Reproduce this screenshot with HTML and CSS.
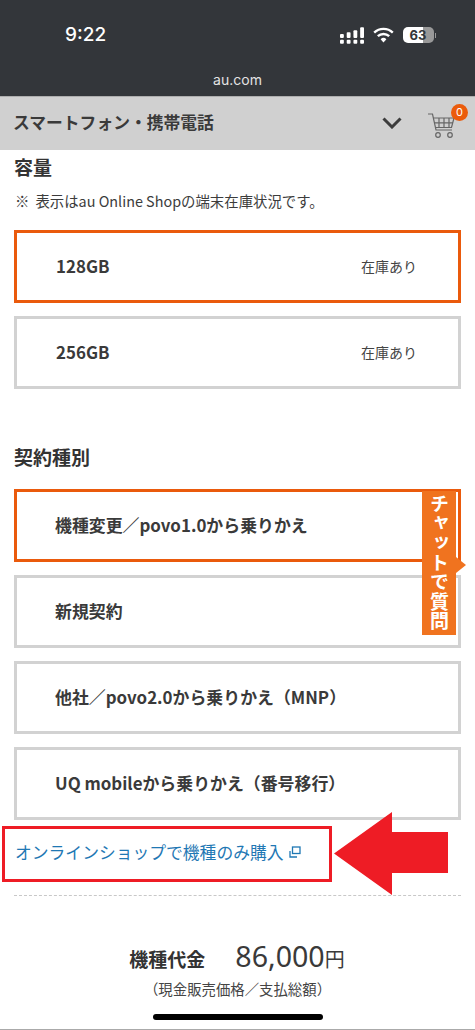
FILE: index.html
```html
<!DOCTYPE html>
<html lang="ja">
<head>
<meta charset="utf-8">
<title>au.com</title>
<link rel="stylesheet" href="styles.css">
</head>
<body>
<div class="phone">
  <header class="chrome">
    <div class="status">
      <span class="time">9:22</span>
      <div class="status-icons">
        <svg class="signal" width="24" height="17" viewBox="0 0 25 17"><g fill="#fff"><rect x="0" y="7" width="4" height="4" rx="1"/><rect x="0" y="13" width="4" height="4" rx="1"/><rect x="7" y="5" width="4" height="6" rx="1"/><rect x="7" y="13" width="4" height="4" rx="1"/><rect x="14" y="3" width="4" height="8" rx="1"/><rect x="14" y="13" width="4" height="4" rx="1"/><rect x="21" y="0" width="4" height="11" rx="1"/><rect x="21" y="13" width="4" height="4" rx="1"/></g></svg>
        <svg class="wifi" width="21" height="16" viewBox="0 0 21 16"><g fill="none" stroke="#fff" stroke-width="2.4"><path d="M1.2 5.6a13.5 13.5 0 0 1 18.6 0"/><path d="M4.800 9.200a8.400 8.400 0 0 1 11.400 0"/></g><path d="M7.600 12.200a4.200 4.200 0 0 1 5.800 0L10.500 15.400z" fill="#fff"/></svg>
        <div class="battery"><span class="battery-num">63</span></div>
        <span class="battery-tip"></span>
      </div>
    </div>
    <div class="url">au.com</div>
  </header>
  <nav class="nav">
    <span class="nav-title">スマートフォン・携帯電話</span>
    <svg class="chev" width="20" height="12" viewBox="0 0 20 12"><path d="M1.500 1.500 10 10l8.500-8.500" fill="none" stroke="#3c3c3c" stroke-width="3"/></svg>
    <div class="cart">
      <svg width="28" height="26" viewBox="0 0 28 26"><g fill="none" stroke="#666" stroke-width="1.200"><path d="M1 1h4.500l3.500 16h16"/><path d="M6 5h21l-2.500 9.500H8"/><path d="M12 5v9.500M17 5v9.500M22 5v9.500M7 9.800h19"/><circle cx="11" cy="22" r="2.300"/><circle cx="23" cy="22" r="2.300"/></g></svg>
      <span class="badge">0</span>
    </div>
  </nav>
  <main class="main">
    <h2 class="h-capacity">容量</h2>
    <p class="note"><span class="note-mark">※</span>表示はau Online Shopの端末在庫状況です。</p>
    <div class="options">
      <div class="opt sel cap"><span class="opt-name">128GB</span><span class="stock">在庫あり</span></div>
      <div class="opt cap"><span class="opt-name">256GB</span><span class="stock">在庫あり</span></div>
    </div>
    <h2 class="h-contract">契約種別</h2>
    <div class="options">
      <div class="opt sel"><span class="opt-name">機種変更／povo1.0から乗りかえ</span></div>
      <div class="opt"><span class="opt-name">新規契約</span></div>
      <div class="opt"><span class="opt-name">他社／povo2.0から乗りかえ（MNP）</span></div>
      <div class="opt"><span class="opt-name">UQ mobileから乗りかえ（番号移行）</span></div>
    </div>
    <div class="link-row">
      <a class="link">オンラインショップで機種のみ購入<svg class="ext" width="12" height="12" viewBox="0 0 12 12"><g fill="none" stroke="#1f78b4" stroke-width="1.300"><rect x="3.500" y="1" width="7.500" height="6.500"/><path d="M1 5v6h7"/></g></svg></a>
    </div>
    <div class="dash"></div>
    <div class="price-row"><span class="price-label">機種代金</span><span class="price">86,000<span class="yen">円</span></span></div>
    <p class="price-note">（現金販売価格／支払総額）</p>
  </main>
  <div class="chat"><span class="chat-text">チャットで質問</span><span class="chat-tip"></span></div>
  <svg class="arrow" width="116" height="83" viewBox="0 0 116 83"><path d="M0 41.500 58 0V20H114V61H58V83z" fill="#ee1c25"/></svg>
  <div class="home"></div>
</div>
</body>
</html>
```

FILE: styles.css
```css
* { box-sizing: border-box; }
html, body { margin: 0; padding: 0; background: #fff; }
body { font-family: "Noto Sans CJK JP", "Noto Sans", sans-serif; color: #333; }
.phone { position: relative; width: 475px; height: 1030px; overflow: hidden; border-bottom: 1px solid #aaa; }

.chrome { height: 96px; background: #33363a; color: #fff; display: flex; flex-direction: column; }
.status { height: 70px; display: flex; align-items: center; padding: 0 0 0 65px; }
.time { font-family: Inter, "Noto Sans", sans-serif; font-size: 19px; font-weight: 500; line-height: 70px; }
.status-icons { margin-left: auto; display: flex; align-items: center; padding-right: 39px; }
.signal { margin-right: 9px; }
.wifi { margin-right: 9px; }
.battery { width: 31px; height: 16px; border-radius: 5px; background: linear-gradient(90deg, #fff 63%, #999 63%); display: flex; align-items: center; justify-content: center; }
.battery-num { font-family: Inter, sans-serif; font-size: 13px; font-weight: 700; color: #33363a; line-height: 16px; }
.battery-tip { width: 1.500px; height: 5px; background: #999; margin-left: 1px; }
.url { text-align: center; font-family: Inter, sans-serif; font-size: 14px; line-height: 20px; color: #e4e4e4; }

.nav { height: 54px; background: #d0d0d0; border-top: 1px solid #aeaeae; display: flex; align-items: center; padding: 0 0 4px 13px; }
.nav-title { font-size: 16.800px; font-weight: 700; color: #3a3a3a; line-height: 50px; }
.chev { margin-left: auto; margin-right: 25px; margin-top: 2px; }
.cart { position: relative; width: 28px; height: 26px; margin-right: 20px; margin-top: 8px; }
.badge { position: absolute; top: -9px; left: 24px; width: 17px; height: 17px; border-radius: 50%; background: #eb5c0c; color: #fff; font-family: Inter, sans-serif; font-size: 11px; line-height: 17px; text-align: center; }

.main { padding: 0 14px; }
h2 { margin: 0; font-size: 19px; font-weight: 700; color: #333; }
.h-capacity { line-height: 36px; height: 36px; margin-top: -1px; }
.note { margin: 0; font-size: 14.400px; line-height: 32px; color: #3c3c3c; height: 45px; }
.note-mark { margin-right: 6px; margin-left: 1px; }
.options { display: flex; flex-direction: column; gap: 13px; }
.opt { height: 73px; border: 3px solid #d2d2d2; display: flex; align-items: center; justify-content: space-between; padding: 0 41px 2px 38px; }
.opt.cap { padding-left: 39px; }
.opt.sel { border-color: #ea5a0c; }
.opt-name { font-size: 16.900px; font-weight: 700; color: #3a3a3a; }
.stock { font-size: 14px; color: #444; }
.h-contract { line-height: 26px; margin-top: 55px; margin-bottom: 19px; }

.link-row { margin: 6px 0 0 -12px; width: 330px; height: 56px; border: 3px solid #ee1c25; display: flex; align-items: center; padding: 0 0 4px 10px; }
.link { font-size: 16.800px; color: #1f78b4; white-space: nowrap; display: flex; align-items: center; }
.ext { margin-left: 5px; }
.dash { margin-top: 13px; border-top: 1px dashed #c8c8c8; }

.price-row { margin-top: 40px; display: flex; justify-content: center; align-items: baseline; height: 44px; padding-right: 1px; }
.price-label { font-size: 19px; font-weight: 700; color: #333; margin-right: 30px; }
.price { font-family: "Noto Sans", sans-serif; font-size: 28.600px; color: #3a3a3a; }
.yen { font-family: "Noto Sans CJK JP", sans-serif; font-size: 20px; }
.price-note { margin: -1px 0 0; text-align: center; font-size: 14.400px; line-height: 20px; color: #444; }

.chat { position: absolute; left: 422px; top: 491px; width: 34px; height: 144px; background: #f0731f; display: flex; justify-content: center; align-items: center; }
.chat-text { writing-mode: vertical-rl; font-size: 19px; font-weight: 700; color: #fff; line-height: 34px; letter-spacing: 0.600px; }
.chat-tip { position: absolute; left: 34px; top: 66px; width: 0; height: 0; border-left: 10px solid #f0731f; border-top: 8px solid transparent; border-bottom: 8px solid transparent; }
.arrow { position: absolute; left: 334px; top: 812px; }
.home { position: absolute; left: 153px; top: 1014px; width: 170px; height: 6px; border-radius: 3px; background: #000; }
```
